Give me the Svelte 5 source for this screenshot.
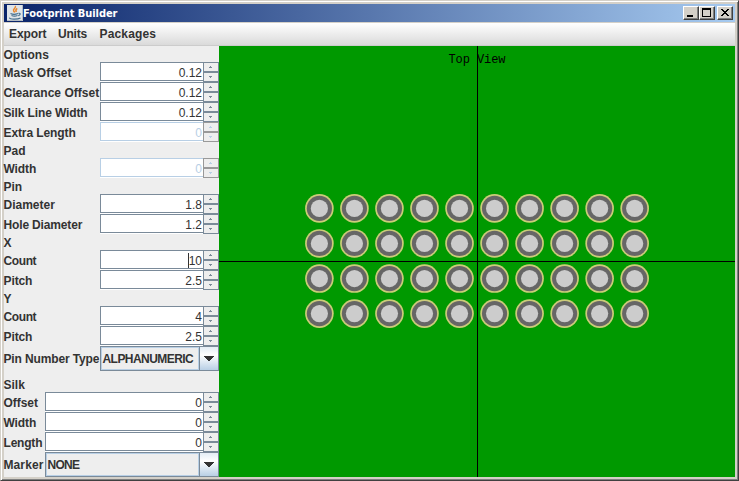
<script>
  // "track" is the letter spacing of a text in pixels
  const options = [
    { heading: 'Options' },
    { label: 'Mask Offset', value: '0.12', track: 0 },
    { label: 'Clearance Offset', value: '0.12', track: 0.02 },
    { label: 'Silk Line Width', value: '0.12', track: -0.13 },
    { label: 'Extra Length', value: '0', disabled: true, track: -0.1 },
    { heading: 'Pad' },
    { label: 'Width', value: '0', disabled: true, track: -0.1 },
    { heading: 'Pin' },
    { label: 'Diameter', value: '1.8', track: 0 },
    { label: 'Hole Diameter', value: '1.2', track: -0.15 },
    { heading: 'X' },
    { label: 'Count', value: '10', focused: true, track: -0.4 },
    { label: 'Pitch', value: '2.5', track: -0.1 },
    { heading: 'Y' },
    { label: 'Count', value: '4', track: -0.4 },
    { label: 'Pitch', value: '2.5', track: -0.1 },
    { label: 'Pin Number Type', choice: 'ALPHANUMERIC', track: -0.13, choiceTrack: -0.55 }
  ];
  const silk = [
    { heading: 'Silk' },
    { label: 'Offset', value: '0', track: -0.05 },
    { label: 'Width', value: '0', track: -0.1 },
    { label: 'Length', value: '0', track: -0.2 },
    { label: 'Marker', choice: 'NONE', track: 0.1, choiceTrack: -0.7 }
  ];
  const pins = [];
  for (let r = 0; r < 4; r++)
    for (let c = 0; c < 10; c++)
      pins.push({ x: 100.4 + c * 35.03, y: 162.4 + r * 35.07 });
</script>

{#snippet form(rows)}
  {#each rows as row}
    {#if row.heading}
      <div class="heading">{row.heading}</div>
    {:else if row.choice}
      <div class="row tall">
        <span class="label" style="letter-spacing: {row.track}px">{row.label}</span>
        <div class="combo">
          <span class="choice" style="letter-spacing: {row.choiceTrack}px">{row.choice}</span>
          <span class="drop">
            <svg width="10" height="5" shape-rendering="crispEdges"><path d="M0 0h10v1h-1v1h-1v1h-1v1h-1v1h-2v-1h-1v-1h-1v-1h-1v-1h-1z" fill="#333" /></svg>
          </span>
        </div>
      </div>
    {:else}
      <div class="row" class:disabled={row.disabled}>
        <span class="label" style="letter-spacing: {row.track}px">{row.label}</span>
        <div class="spinner">
          <div class="field">{#if row.focused}<i class="caret"></i>{/if}<span>{row.value}</span></div>
          <div class="steps">
            <span class="step"><svg width="3" height="2" shape-rendering="crispEdges"><path d="M1 0h1v1h1v1h-3v-1h1z" /></svg></span>
            <span class="step"><svg width="3" height="2" shape-rendering="crispEdges"><path d="M0 0h3v1h-1v1h-1v-1h-1z" /></svg></span>
          </div>
        </div>
      </div>
    {/if}
  {/each}
{/snippet}

<div class="window">
  <header>
    <svg class="java" width="16" height="16" viewBox="0 0 16 16">
      <rect width="16" height="16" fill="#dfe4e8" />
      <path d="M0 15.5h15.500V0" fill="none" stroke="#b4bcc4" />
      <path d="M8.300 1c1.200 2-3 3-1.600 5l1 1.500M10.300 3.500c-2.200 1-1.500 2-1 3.500" fill="none" stroke="#e8862c" stroke-width="1.500" />
      <path d="M3.500 8.500c2 1 5 1 7.500 0M4.500 10.500c2 .8 4 .8 6 0M2.500 12.700c-.5 1.800 8 2 11 .3M11.500 8.300c2.500-.5 2 2-.3 2.400" fill="none" stroke="#466f8e" stroke-width="1.200" />
    </svg>
    <span class="title">Footprint Builder</span>
    <div class="controls">
      <span class="btn"><svg width="14" height="12" shape-rendering="crispEdges"><path d="M3 8h6v2h-6z" /></svg></span>
      <span class="btn"><svg width="14" height="12" shape-rendering="crispEdges"><path fill-rule="evenodd" d="M2 1h9v9h-9zM3 3v6h7v-6z" /></svg></span>
      <span class="btn close"><svg width="14" height="12" shape-rendering="crispEdges"><path d="M3 2h2v1h1v1h2v-1h1v-1h2v1h-1v1h-1v1h-1v1h1v1h1v1h1v1h-2v-1h-1v-1h-2v1h-1v1h-2v-1h1v-1h1v-1h1v-1h-1v-1h-1v-1h-1z" /></svg></span>
    </div>
  </header>
  <nav><span class="export">Export</span><span class="units">Units</span><span class="packages">Packages</span></nav>
  <main>
    <aside>
      <section class="options">{@render form(options)}</section>
      <section class="silk">{@render form(silk)}</section>
    </aside>
    <svg class="board" width="516" height="431">
      {#each pins as p}
        <circle cx={p.x} cy={p.y} r="14.3" fill="#cccc7a" />
        <circle cx={p.x} cy={p.y} r="12.6" fill="#666" />
        <circle cx={p.x} cy={p.y} r="8.6" fill="#ccc" />
      {/each}
      <path d="M258 0h1v431h-1zM0 215h516v1h-516z" fill="#000" shape-rendering="crispEdges" />
      <text x="229.500" y="17" textLength="57">Top View</text>
    </svg>
  </main>
</div>

<style>
  * { box-sizing: border-box; }
  .window {
    width: 739px; height: 481px; padding: 3px;
    display: flex; flex-direction: column;
    background: #d4d0c8; border: 1px solid; border-color: #d4d0c8 #404040 #404040 #d4d0c8;
    box-shadow: inset 1px 1px #fff, inset -1px -1px #808080;
    font: bold 12px/16px "Liberation Sans", Arial, sans-serif; color: #333;
  }
  header {
    height: 18px; flex: none; display: flex; align-items: center; padding: 0 2px;
    background: linear-gradient(90deg, #0a246a, #a6caf0);
  }
  .java { margin-left: 1px; flex: none; }
  .title {
    color: #fff; white-space: nowrap; padding-top: 2px;
    font: bold 11px/16px "DejaVu Sans Condensed", "DejaVu Sans", sans-serif; font-stretch: condensed;
    letter-spacing: -0.05px;
  }
  .controls { display: flex; margin-left: auto; }
  .btn {
    width: 16px; height: 14px; background: #d4d0c8; border: 1px solid;
    border-color: #fff #404040 #404040 #fff; box-shadow: inset -1px -1px #808080;
  }
  .btn svg { display: block; }
  .close { margin-left: 2px; }
  nav {
    height: 24px; flex: none; display: flex; padding: 3px 5px 0;
    border-top: 1px solid #d4d0c8; border-bottom: 1px solid #ccc;
    background: linear-gradient(#fff, #dadada);
  }
  .export { width: 49px; letter-spacing: -0.1px; }
  .units { width: 41.5px; letter-spacing: -0.2px; }
  .packages { letter-spacing: 0.15px; }
  main { display: flex; height: 431px; flex: none; }
  aside { width: 215px; background: #eee; display: flex; flex-direction: column; gap: 5px; }
  .heading { height: 16px; padding-top: 1px; margin-left: -0.5px; }
  .row { display: flex; height: 20px; align-items: center; }
  .tall { height: 25px; }
  .label { width: 96px; flex: none; white-space: nowrap; padding-top: 1px; text-indent: -0.5px; }
  .silk .label { width: 41px; }
  .spinner { flex: 1; display: flex; height: 20px; }
  .field {
    flex: 1; height: 19px; display: flex; justify-content: flex-end; align-items: center;
    background: #fff; border: 1px solid #7a8a99; border-right: 0; padding: 2px 1px 0 0;
    box-shadow: 0 1px #fff; font-weight: normal;
  }
  .caret { width: 1px; height: 15px; background: #333; }
  .steps { width: 16px; }
  .step {
    display: flex; height: 10px; align-items: center; justify-content: center; padding-right: 1px;
    border: 1px solid #7a8a99; fill: #7a8a99; background: #eee;
  }
  .disabled .field { border-color: #b8cfe5; color: #b8cfe5; }
  .disabled .step { border-color: #999; fill: #b8cfe5; }
  .combo { flex: 1; min-width: 0; height: 25px; display: flex; border: 1px solid #7a8a99; }
  .choice {
    flex: 1; min-width: 0; border: 1px solid #b8cfe5; padding: 3px 0 0 0.5px;
    white-space: nowrap; line-height: 17px;
  }
  .drop {
    width: 19px; flex: none; display: flex; align-items: center; justify-content: center;
    border-left: 1px solid #7a8a99; background: linear-gradient(#e4edf5, #fff 35%, #b8cfe5);
  }
  .board { background: #090; display: block; }
  .board text { font: 12px "Liberation Mono", "Courier New", monospace; fill: #000; }
</style>
